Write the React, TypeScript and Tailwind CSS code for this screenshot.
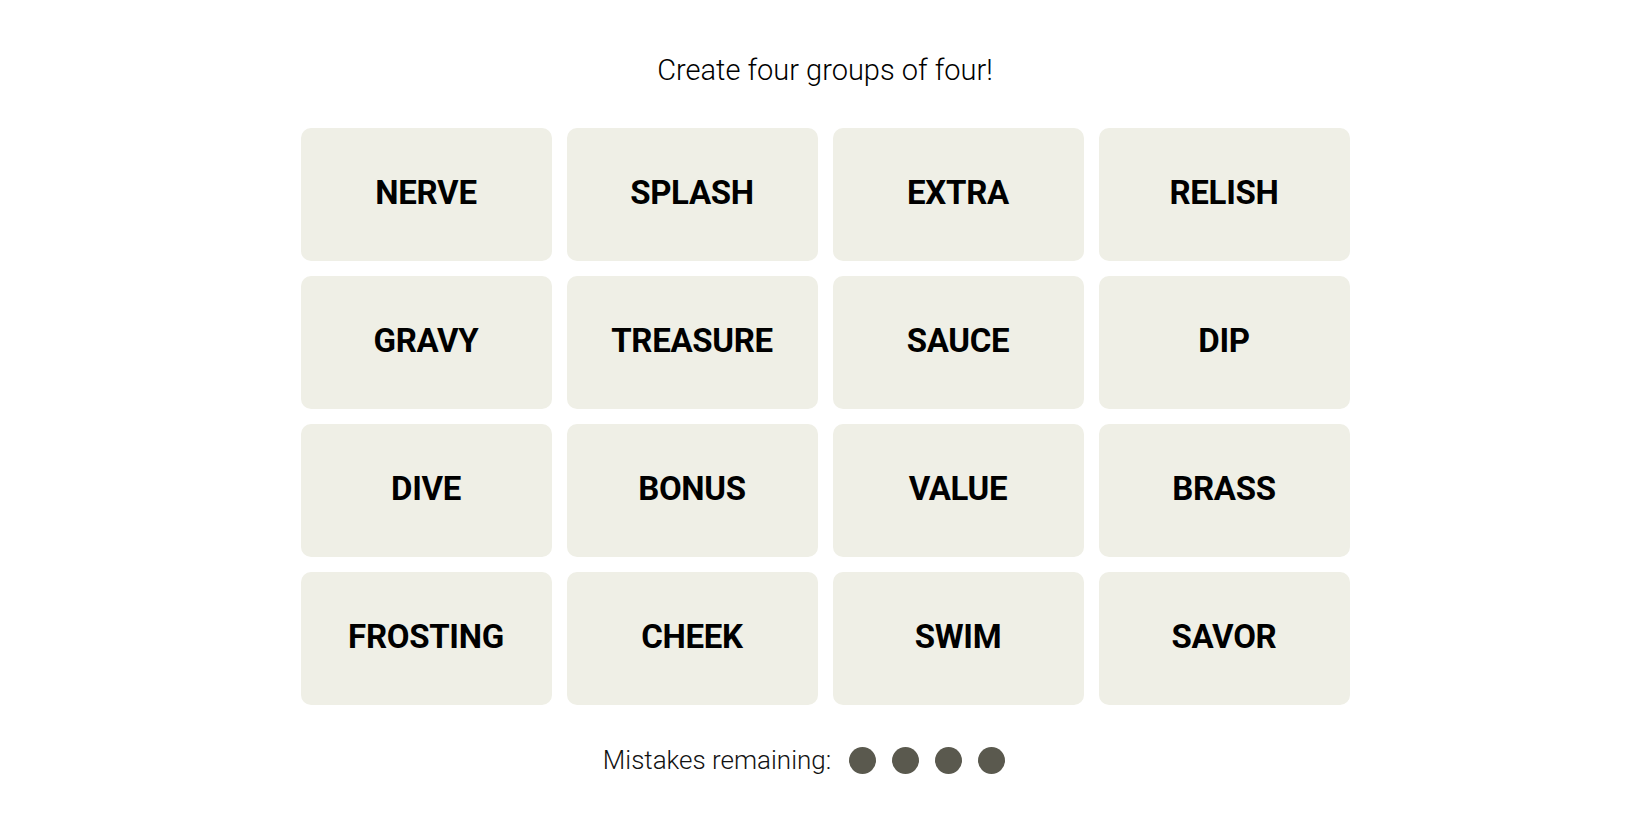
const words = [
  'NERVE', 'SPLASH', 'EXTRA', 'RELISH',
  'GRAVY', 'TREASURE', 'SAUCE', 'DIP',
  'DIVE', 'BONUS', 'VALUE', 'BRASS',
  'FROSTING', 'CHEEK', 'SWIM', 'SAVOR',
];

export default function App() {
  return (
    <div className="min-h-screen bg-white flex flex-col items-center font-['Roboto',sans-serif] text-black">
      <p className="pt-[48px] h-[92px] leading-[44px] text-[29px] font-light text-black">
        Create four groups of four!
      </p>

      <div className="mt-[36px] grid grid-cols-[repeat(4,251px)] auto-rows-[133px] gap-[15px]">
        {words.map((w) => (
          <button
            key={w}
            className="rounded-[10px] bg-[#efefe6] flex items-center justify-center pb-[3px] text-[33px] font-bold uppercase tracking-[-0.3px]"
          >
            {w}
          </button>
        ))}
      </div>

      <div className="mt-[35px] h-[40px] flex items-center pr-[42px]">
        <span className="text-[26px] font-light text-[#121212]">Mistakes remaining:</span>
        <div className="ml-[18px] flex items-center gap-[16px]">
          {[0, 1, 2, 3].map((i) => (
            <span key={i} className="w-[27px] h-[27px] rounded-full bg-[#5a594e]" />
          ))}
        </div>
      </div>
    </div>
  );
}
